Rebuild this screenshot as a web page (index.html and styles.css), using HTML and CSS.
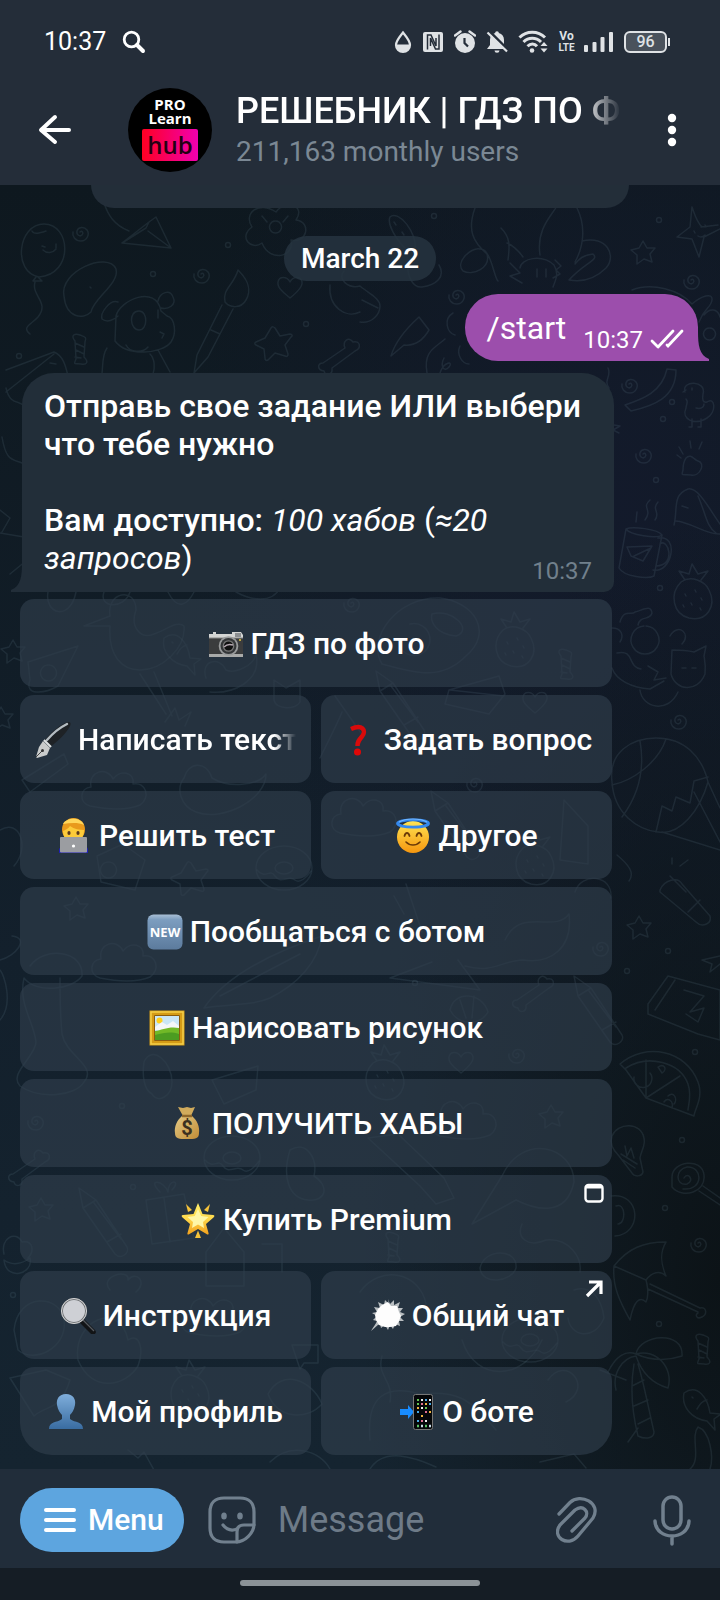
FILE: index.html
```html
<!DOCTYPE html>
<html lang="ru">
<head>
<meta charset="utf-8">
<meta name="viewport" content="width=device-width, initial-scale=1">
<title>РЕШЕБНИК | ГДЗ ПО ФОТО</title>
<link rel="stylesheet" href="styles.css">
</head>
<body>
<div class="app">
  <div class="status">
    <span class="status-time">10:37</span>
    <svg class="ic" width="24" height="24" viewBox="0 0 24 24" fill="none" stroke="#fff"><circle cx="9.500" cy="9.500" r="7.300" stroke-width="2.800"/><path d="M15 15l6 6" stroke-width="4" stroke-linecap="round"/></svg>
    <div class="status-right">
      <svg class="ic" width="18" height="24" viewBox="0 0 18 24"><path d="M9 2.500C6 6.500 2 10.500 2 15a7 7 0 0 0 14 0C16 10.500 12 6.500 9 2.500z" fill="none" stroke="#dfe2e5" stroke-width="2.200"/><path d="M2 14.500h14a7 7.500 0 0 1-14 0z" fill="#dfe2e5"/></svg>
      <svg class="ic" width="22" height="24" viewBox="0 0 22 24"><rect x="1" y="2" width="20" height="20" rx="2" fill="#dfe2e5"/><path d="M5.500 19.500V5H9l5 11V8M17 4.500V19h-3.500L8.500 8v8" fill="none" stroke="#242d39" stroke-width="1.500"/></svg>
      <svg class="ic" width="22" height="24" viewBox="0 0 22 24"><circle cx="11" cy="13" r="10" fill="#dfe2e5"/><path d="M1 5.500l5.500-4M21 5.500l-5.500-4" stroke="#dfe2e5" stroke-width="2.400" stroke-linecap="round"/><path d="M10.500 8v5l3.500 3.500" fill="none" stroke="#242d39" stroke-width="2.200"/></svg>
      <svg class="ic" width="22" height="24" viewBox="0 0 22 24"><path d="M11 1.200c1.200 0 1.800.8 1.800 1.800 3.400.9 5.200 3.600 5.200 7v5l3 4H1l3-4v-5c0-3.400 1.800-6.100 5.200-7 0-1 .6-1.800 1.800-1.800z" fill="#dfe2e5"/><path d="M8.500 20.500h5a2.500 2.300 0 0 1-5 0z" fill="#dfe2e5"/><path d="M3 1l19 19" stroke="#242d39" stroke-width="3"/><path d="M1.500 2.500l19.500 19" stroke="#dfe2e5" stroke-width="2.200"/></svg>
      <svg class="ic" width="31" height="24" viewBox="0 0 31 24"><g fill="none" stroke="#dfe2e5" stroke-width="3"><path d="M1.500 7.500c7-7 18.500-7 25.500 0"/><path d="M5.500 12c5-5 12.500-5 17.500 0"/><path d="M9.500 16.300c3-3 7-3 9.500 0"/></g><circle cx="14" cy="20.500" r="2.300" fill="#dfe2e5"/><path d="M22.500 16l3.500-4 3.500 4zM22.500 18.500l3.500 4 3.500-4z" fill="#dfe2e5"/></svg>
      <span class="volte"><span class="vo">Vo</span><span class="lte">LTE</span></span>
      <svg class="ic" width="30" height="24" viewBox="0 0 30 24" fill="#dfe2e5"><rect x="0" y="15" width="4" height="7" rx="1"/><rect x="8.500" y="12" width="4" height="10" rx="1"/><rect x="16.500" y="7" width="4" height="15" rx="1"/><rect x="25" y="2" width="4" height="20" rx="1"/></svg>
      <span class="battery">96</span>
    </div>
  </div>

  <header class="header">
    <button class="icon-btn back" aria-label="Back"><svg width="36" height="34" viewBox="0 0 36 34" fill="none" stroke="#fff" stroke-width="4" stroke-linecap="round" stroke-linejoin="round"><path d="M17 4L3 17l14 12M4 17h27"/></svg></button>
    <div class="avatar"><span class="av-pro">PRO</span><span class="av-learn">Learn</span><span class="av-hub">hub</span></div>
    <div class="titles">
      <h1 class="title">РЕШЕБНИК | ГДЗ ПО Ф</h1>
      <p class="subtitle">211,163 monthly users</p>
    </div>
    <button class="icon-btn more" aria-label="More"><svg width="10" height="34" viewBox="0 0 10 34" fill="#fff"><circle cx="5" cy="5" r="4.200"/><circle cx="5" cy="17" r="4.200"/><circle cx="5" cy="29" r="4.200"/></svg></button>
  </header>

  <main class="chat">
    <svg class="doodles" viewBox="0 185 720 1284" preserveAspectRatio="xMidYMin slice" fill="none" stroke="#8fb0c0" stroke-opacity=".115" stroke-width="1.500" stroke-linecap="round" stroke-linejoin="round" aria-hidden="true">
      <defs>
        <path id="spiral" d="M1 1c2-2 4 1 2 3s-6 0-5-4 7-5 10-1 0 11-6 11-9-5-8-9"/>
        <path id="star" d="M-5-14c1-2 3-1 4 0l5 8 10-2c2 0 3 2 1 3l-6 8 3 9c0 2-1 3-3 2l-10-3-7 7c-2 1-3 0-3-2l-1-9-8-4c-2-1-1-3 0-3l9-4z"/>
        <path id="star-s" d="M-1-10l4 7 8 0-5 6 2 8-8-3-7 5 0-9-6-5 8-2z"/>
        <circle id="dot" r="2.500"/>
        <path id="heart" d="M0 10C-6 5-13 0-12-6c1-6 9-6 12 0 3-6 11-6 12 0 1 5-7 12-12 16z"/>
        <path id="candy" d="M-5-9c-5-6 0-8 5-6s7 2 5 7l-1 15c5 5 3 8-3 7s-8 2-5-5zM-5-7l9 4M-4 0l8 4M-5 7l6 1"/>
        <path id="bone" d="M-17 8l22-15c-3-7 4-12 8-6 7-2 9 6 2 9L-8 13c1 8-7 8-8 3-7-1-7-8-1-8z"/>
        <path id="bulb" d="M-8 10c-5-5-10-12-7-20C-9-24 14-24 17-8c2 8-3 12-4 20l3 14c-1 5-9 5-11 1zM-6 8l16 10M-4 14l12 8M-2 0l2 10 4-8 3 10"/>
        <path id="fish" d="M-16-12C-2-22 8-6 10 8l11 1-7 5 1 11-8-9C-8 14-19 2-16-12zM-8-8l1 1M-3 4C0-1 2-4 7-5"/>
        <path id="cloud" d="M-30 18c-12-4-10-18 1-19-3-16 16-21 22-8 7-10 22-7 20 5 13-3 18 14 7 21-12 5-30 5-50 1z"/>
        <g id="donut"><ellipse rx="28" ry="22"/><ellipse rx="9" ry="6"/><path d="M-27 2c8 10 13-2 18 6 6 9 14-2 20 4 5 4 12-3 16-9"/></g>
        <path id="fruit" d="M-12-12C-24 0-20 20-4 24c18 4 28-12 20-28-4-9-18-15-28-8zM-8-14l-6-9 10 3 3-10 6 10 10-3-7 9M-8 0l1 2M2-4l1 2M8 4l1 2M-2 9l1 2M-10 11l1 2M7 14l1 2"/>
        <path id="pencil" d="M-24-34l4 20 32 46c6 6 15-1 12-7L-7-22zM-20-14l13-8M4 20l14-8M-9-19l27 36"/>
      </defs>
      <use href="#spiral" x="79" y="231"/><use href="#spiral" x="200" y="273"/><use href="#spiral" x="455" y="294"/><use href="#spiral" x="690" y="279"/><use href="#spiral" x="628" y="383"/><use href="#spiral" x="642" y="453"/><use href="#spiral" x="677" y="719"/><use href="#spiral" x="350" y="602"/><use href="#spiral" x="473" y="782"/><use href="#spiral" x="599" y="946"/><use href="#spiral" x="515" y="1053"/><use href="#spiral" x="697" y="1242"/><use href="#spiral" x="34" y="1120"/>
      <use href="#star" x="276" y="342"/><use href="#star-s" x="644" y="251"/><use href="#star-s" x="640" y="926"/><use href="#star-s" x="14" y="650"/><use href="#star-s" x="2" y="717"/><use href="#star" x="192" y="877"/><use href="#star-s" x="552" y="1115"/><use href="#star-s" x="42" y="1208"/><use href="#star-s" x="77" y="907"/>
      <use href="#dot" x="153" y="274"/><use href="#dot" x="228" y="245"/><use href="#dot" x="306" y="324"/><use href="#dot" x="19" y="356"/><use href="#dot" x="434" y="216"/><use href="#dot" x="659" y="220"/><use href="#dot" x="672" y="402"/><use href="#dot" x="663" y="419"/><use href="#dot" x="656" y="480"/><use href="#dot" x="660" y="588"/><use href="#dot" x="668" y="951"/><use href="#dot" x="627" y="971"/><use href="#dot" x="695" y="1052"/><use href="#dot" x="682" y="1140"/><use href="#dot" x="665" y="1208"/><use href="#dot" x="659" y="1324"/><use href="#dot" x="415" y="983"/><use href="#dot" x="122" y="1106"/><use href="#dot" x="13" y="1295"/><use href="#dot" x="133" y="1187"/>
      <use href="#heart" x="290" y="288"/><use href="#heart" x="535" y="703"/><use href="#heart" x="461" y="1063"/>
      <use href="#candy" x="80" y="350"/><use href="#candy" x="566" y="665"/><use href="#candy" x="703" y="1350"/><use href="#candy" x="393" y="1248"/>
      <use href="#bone" x="340" y="355"/><use href="#bone" x="534" y="992"/><use href="#bone" x="30" y="1166"/>
      <use href="#bulb" x="627" y="1146"/><use href="#fish" x="700" y="1405"/><use href="#fish" x="180" y="650"/>
      <use href="#cloud" x="120" y="788"/><use href="#cloud" x="370" y="815"/><use href="#cloud" x="470" y="1118"/><use href="#cloud" x="220" y="1315"/><use href="#cloud" x="130" y="960"/>
      <use href="#donut" x="232" y="1158"/><use href="#donut" x="284" y="868"/><use href="#donut" x="530" y="1340"/>
      <use href="#fruit" x="693" y="594"/><use href="#fruit" x="515" y="642"/><use href="#fruit" x="385" y="1075"/><use href="#fruit" x="190" y="1390"/><use href="#fruit" x="535" y="860"/>
      <use href="#pencil" x="103" y="1222"/><use href="#pencil" x="400" y="705"/><use href="#pencil" x="598" y="1010"/><use href="#pencil" x="455" y="825"/>
      <path d="M44 224c27 0 30 50-5 53C12 272 18 224 44 224zM32 231c2 4 8 2 14 0M42 246l3 1M56 244v4M43 250c4 4 10 3 13-1M36 277l-3 4h9l-4-4M35 282c-4 14 15 20 3 35-6 7-17 10-8 17"/>
      <path d="M122 243l27-21 7-5 15 31zM122 243l24-15 3-6M148 231l23 17M104 203c4 12 10 22 25 28"/>
      <path d="M64 296c-5-25 44-45 52-27 4 14-23 30-25 43-8 8-25 6-27-16zM90 287l1 1"/>
      <path d="M116 316c4-16 40-32 45-5l6 5c8 2 10 17 4 26-9 12-44 15-56-1zM118 302c-8-3-18 11-16 17 5 4 12 1 16-3M158 301c2-9 12-12 15-4 4 8-5 13-12 11M139 311c9 0 9 19 0 19s-11-19 0-19zM158 310v8M160 332l4 2-2 4M126 345c4 8 17 8 22 2M107 348c-5 7-4 16-5 26M150 354c5 5 5 14 3 20M158 350l12 22"/>
      <path d="M238 270c8 8 15 18 8 30-5 9-16 8-21 2-3-13 9-17 13-32zM222 305l-25 50-3 18 14-16 25-48M211 330l9 4"/>
      <path d="M276 212c-18-12-33 2-24 15-14 10-1 24 10 16 8 20 33 14 29-3 16 4 21-18 5-20 10-14-10-22-20-8zM275 221a6 6 0 1 0 1 0M262 216l5 6M288 216l-5 6"/>
      <path d="M390 217c8-8 28 16 25 33M390 217c-4 8 12 34 25 37M394 222l2 3M402 232l2 3M408 260c-2 18 6 28 14 27 14-2 24-10 17-22"/>
      <path d="M330 285c-2 22 16 34 30 27M344 271c-7 8 4 18 16 15 8 7 20 12 20 20s-8 18-20 16M362 300l16 8"/>
      <path d="M475 208c-8 22-2 34 12 46 4 14-14 22-24 17-8-8 7-24 17-22 11-1 14 29 18 32M501 228c9 9 9 17 7 32M507 243c4 1 12 8 16 14M540 255c-4-26 12-40 17-49M577 208c8 16 8 36-2 54M582 241c25-6 35 15 24 27-12 12-26 14-37 12 16-18 31-20 24-26-10 1-14 5-18 10M520 268c1-10 22-14 34-3 5 9 2 14-1 22M510 263l10 10-10 3 12 7M555 260l6 6-5 4 4 4-7 4M537 269v8M546 269v8"/>
      <path d="M692 207c2 5 4 14 10 20M692 207l-2 20-13 10 15 2 7 18 5-20 16-8M701 227l17-2M694 231l1 2M705 225l1 2M698 236c3 2 5 1 7-1"/>
      <path d="M391 356c4-14 17-29 28-39l10 13c-7 12-16 16-25 15zM427 373c-4-22 8-25 18-34M440 373c4-12 14-12 9-6s-9-1-5-9M453 313c-10 6-6 20 2 22M460 346c-4 8 2 18 9 18"/>
      <path d="M632 290c20-8 48 0 60 14 9-8 21-12 20-4s-8 8-13 22M704 315c6-8 14-6 16 2M709 328a6 6 0 1 0 1 0"/>
      <path d="M625 405c18-6 37-13 42-36l9 1c0 28-23 36-45 41zM608 368c4 8-5 12 1 20M614 425l6 1-7 4 6 3"/>
      <path d="M685 392c-4-12 22-12 18 2-1 6 0 9 4 8 8-6 10 10 0 16-13 8-26 1-21-10 0-4 3-6 0-9M692 419v8h-3M701 419v8h-3M686 390l-3 2M692 388v2M696 408c4 1 8 0 8-4"/>
      <path d="M686 458c5-5 8 2 12 3 8 2 2 16-7 14-9-1-10 2-8-5 0-4 1-9 3-12zM679 447l4 7M690 441l1 7M702 442l-3 7M677 455l4 3"/>
      <path d="M674 525c4-16-2-30 14-36 10-2 20 18 32 35M676 521c15 1 30 14 44 13M682 506l6 2M698 496c8 18 8 30 18 37"/>
      <path d="M626 529c6-3 32 0 36 6-5 4-32 0-36-6zl-7 39c5 9 29 11 35 8l8-41M660 544c8-7 17 22-4 22M658 538c22-4 14 36-5 32M627 547l25-1-9 15-12-5zM634 556l17-8M636 522l1-10M645 520c8-11-4-12 5-20M655 520c6-8-4-10 3-18"/>
      <path d="M620 622c4-14 12-6 15-10 8-2 16-8 17 1-2 8-12 2-14 12M612 628c10 0 12 8 8 14M644 626a14 14 0 1 0 2 0M670 636c8-14 22-2 12 8M672 650l-1 24c4 16 26 20 34 0 1-8 0-12-1-18l2-10-12 6c-8-2-14-2-22-2zM682 668h4M692 668h4M612 668c4 12 20 20 38 21l14-8M640 690c2 18 28 24 38 2M648 666l10 6-4 8 12-2M617 653c18-4 10 14 24 16"/>
      <path d="M612 782c-4-30 20-44 44-44 28 0 46 18 52 44-8 28-28 54-50 50-20-2-44-18-46-50zM612 785c20-4 46-22 54-46M640 741c6 34-6 60-18 76M656 832l6-26 10 5 4-14 14 6 4-22 14-4M662 832l58 18M694 792l26 50M708 782l12 26"/>
      <path d="M660 890c4-10 18-14 22-6l28 32c2 8-8 12-14 6l-36-30zM670 876l16 16M688 912l12-12M672 864v-6M680 866l8-6M617 855c12 10 18 18 12 26M720 956l-18 4 10 4-2 8 10-8"/>
      <path d="M648 1004l20-28 52 14v50l-22-6-50-20zM655 1010l20-30M684 990l20 6-14 16 14-4-6 14-12-8"/>
      <path d="M620 1064c26-22 66-14 78 18 6 16-4 28-4 34l-48-18-20-28zM626 1068c22-14 54-6 62 16 4 12 0 22 0 26M646 1060v38l34-22M634 1077a9 9 0 1 0 16-4M658 1067c6-4 10 2 4 6zM668 1096c6-6 10 4 6 8M664 1102c4-6 10 0 8 6"/>
      <path d="M672 1177c0-16 30-20 32-2 2 18-22 24-32 12zM684 1178c4-7 11 3 3 6-12 2-12-15 0-17 16-1 17 24-4 22M703 1186l17 12M699 1191l21 14M611 1196c30-4 32 38 4 40M616 1206c10-4 10 18 2 18"/>
      <path d="M614 1266c14-18 30-24 52-24-6 10-6 20 0 34-6-6-14-4-20 4 0 0 4 14 0 22-6-6-12-2-16 18-10-18-18-34-16-54zM614 1266l32 14M650 1284l50 24c6-2 8 6 2 9s-7-3-4-4M648 1289l50 23"/>
      <path d="M608 1372c8-16 18-22 28-18 4-20 48-24 46 2-12 4-28 6-46-2 20-6 38 14 32 34-14-4-26-14-32-32-14 2-24 18-20 34M634 1364c-4 24-2 48 4 72 8 4 16 2 16-4-6-26-10-48-16-68M632 1386l12-6M634 1406l14-6M638 1424l12-6M628 1442l10-14M690 1469c12-10 0-32 8-42 12 4 16 30 12 42M600 1370l26 10"/>
      <path d="M6 370l48-18c10 4 12 16 14 24M6 392l48-38M6 388c4 18 14 12 18 18M50 363l6 1M2 437c4 24 10 22 20 26M0 510l10 8-8 14M0 533l24 4M10 574l22-18M0 830c20-12 30 18 14 36M0 960c16-4 30-22 12-24M0 1020c14-16 4-46 0-50"/>
      <path d="M48 592c-4 22 22 30 28 0M104 592c-6 16 20 18 26 0M168 592c10 20 20 12 26 0M236 592c14 8 36 12 44-4M84 626l26-10c-4-24 26-30 26-6-6 16 4 30 18 24 12-4 24-14 30-8 2 22-22 44-44 44-18 0-32-14-30-44zM28 662l50-16-20 40c-14 8-34 10-28-6zM48 665a8 8 0 1 0 1 0M140 674l26 40M154 672l18 44M165 722l10-14 4 12 12-8-6 14"/>
      <path d="M206 678c-6-18 14-22 20-8 8 4 28-4 30-16 6 28-24 40-46 38M274 700v-20l12 8 14-8v22c-4 8-24 8-26-2zM382 664c-16-26 16-68 58-66 34 4 54 34 26 58-24 24-46 18-84 8zM398 640a16 16 0 1 0 12-16M432 614c20-6 42 16 24 22-20-2-26-14-24-22M449 690l50-14 6 18-16 20-44-10zM450 690l54 6"/>
      <path d="M184 778c4-16 22-18 28 0 16 10 46 8 54-4 0 26-44 48-70 38-16-6-20-24-12-34zM22 780l42-26 4 10-38 28zM97 856l26-12 22 16-10 30-34-8zM108 862a8 8 0 1 0 1 0M335 696l28 40M320 758c10-20 20-40 22-46M575 892c6-20 38-18 36 6M564 800l24 26v38l-28-4z"/>
      <path d="M204 1008c22-32 70-56 118-72-4 26-24 48-52 62-18 8-44 6-66 10zM220 996l80-42M406 884l16 48M394 896l10 18M432 962l-42 16 90 12-22-30M505 940c16-34 50-6 64-26 4 34-18 50-46 46-20 0-30 14-58 6M450 1010c4-20 32-18 38 2-6 12-28 16-38-2zM460 1000l6 18M474 996l-2 22"/>
      <path d="M30 966c14-20 54-16 52 10-10 14-46 18-58 2-6 26 10 44 12 64 0 14-28 32-16 44 20 14 56 10 64-4 14-16-18-26-22-48-2-20-2-42-2-56M144 1062c8-18 28 0 28 20 0 14-14 22-20 12-8-4-10-18-8-32zM212 1080l46-14-2 24-32 14zM290 1150c16-10 28 8 24 26 16 10 12 26-6 24-20-2-26-24-18-50M110 1290c-12-14 20-22 18-10 8-10 20 2 8 12"/>
      <path d="M146 1200l38-6 10 44-42 6zM164 1198l6 44M160 1192c-14-14 4-12 8 0 0-14 14-12 4-2M368 1138l52 48 16 18 18-6-10-20-46-44zM472 1224l30-48c20-44 72-30 72 6-8 38-42 26-58 18zM522 1224c-6 14 6 24 24 16 24-2 36 18 34 32M480 1268c4-20 38-20 36 0-4 14-34 18-36 0M206 1252l18-24 20 24v34h-38zM262 1244h20v28"/>
      <path d="M14 1330c4-38 46-36 50-10 4 28-30 44-46 30zM78 1360c-6-40 42-60 50-20 12-8 16 10 10 26-12 20-46 28-60-6zM10 1378l36-8 24 10c-10 32-22 24-36 36zM268 1394c14-26 44-14 54 10-14 16-44 16-54-10zM292 1345h26v18h-14l-4 6zM128 1450l10 8 6-6 10 18M270 1462c20-20 50-12 60 7M370 1440c-4-44 16-56 50-46 36-4 50 4 76 36M382 1356c-6 20 12 24 8 46M370 1469c14-22 44-12 66-2M540 1462l34-8 12 14"/>
      <path d="M360 1292c20-28 60-20 66 12M462 1340c14 44 62 40 80 0M548 1380c18-26 46 8 18 22M574 1290c18-6 28 10 30 28-10 24-34 18-36 0M4 1254c-4-16 12-24 18-12 12-2 12 10 6 16M4 1260c8 6 18 4 26-2 4 16-24 24-26 2z"/>
    </svg>

    <div class="prev-bubble"></div>
    <div class="date">March 22</div>

    <div class="out">
      <span class="out-text">/start</span>
      <span class="out-time">10:37</span>
      <svg class="checks" width="34" height="20" viewBox="0 0 34 20" fill="none" stroke="#fff" stroke-width="2.800" stroke-linecap="round"><path d="M2 12l6 6M8 18L23 2M17 16l1 1L32 2"/></svg>
      <svg class="tail tail-out" width="12" height="30" viewBox="0 0 12 30"><path d="M0 0c0 14 1 24 11 28v2H0z" fill="#9c4eac"/></svg>
    </div>

    <section class="incoming">
      <div class="in">
        <div class="in-text"><b>Отправь свое задание ИЛИ выбери что тебе нужно</b><br><br><b>Вам доступно:</b> <i>100 хабов</i> (<i>≈20 запросов</i>)<span class="in-time">10:37</span></div>
        <svg class="tail tail-in" width="12" height="30" viewBox="0 0 12 30"><path d="M12 0c0 14-1 24-11 28v2h11z" fill="#222e39"/></svg>
      </div>

      <div class="keys">
        <button class="key wide"><span class="label">
          <svg class="emoji" viewBox="0 0 36 36"><path d="M1 8h4V6h3v2h16V6h9l2 3v5H1z" fill="#d4d5d4"/><rect x="1" y="12" width="34" height="17" fill="#3b3c3d"/><rect x="1" y="28" width="34" height="3" fill="#a9aaa9"/><path d="M1 12h34" stroke="#888"/><rect x="27" y="7" width="6" height="4" fill="#8c8f92"/><circle cx="20.500" cy="20" r="9.800" fill="#999b9c"/><circle cx="20.500" cy="20" r="8" fill="#343638"/><circle cx="20.500" cy="20" r="5.200" fill="#111" stroke="#777" stroke-width="1.300"/><path d="M16 21c3-3 6-3 9-2" stroke="#b6a9b2" stroke-width="1.500" fill="none"/><circle cx="32" cy="14" r="1" fill="#e4ca44"/></svg>
          <span>ГДЗ по фото</span></span></button>

        <button class="key"><span class="label clipped">
          <svg class="emoji" viewBox="0 0 36 36"><path d="M9 19C16 10 26 2 33 0c3 0 3 2 2 4-4 8-12 15-20 21z" fill="#1e2226"/><path d="M12 18C18 11 26 5 32 2" fill="none" stroke="#b4bcc1" stroke-width="2.400" stroke-linecap="round"/><path d="M9 18l7 7" stroke="#dfe2e3" stroke-width="2.200"/><path d="M8 19l7 7-3 7-10 3-1-1 3-10z" fill="#c9cbcb"/><path d="M1 35l6-6" stroke="#444" stroke-width="1"/><circle cx="7.500" cy="28.500" r="1.500" fill="#333"/></svg>
          <span>Написать текст</span></span></button>
        <button class="key"><span class="label">
          <svg class="emoji" viewBox="0 0 36 36"><path d="M10 7C21 2 26 8 21 14.500c-3 3.500-4.500 5-4.500 9.500" fill="none" stroke="#d90b0b" stroke-width="4.500"/><circle cx="16.500" cy="30" r="3.500" fill="#e00707"/></svg>
          <span>Задать вопрос</span></span></button>

        <button class="key"><span class="label">
          <svg class="emoji" viewBox="0 0 36 36"><path d="M3 35V31c2-3 5-5 9-6h12c4 1 7 3 8 6v4z" fill="#2020b8"/><circle cx="17.500" cy="11.500" r="11.500" fill="#e99a1c"/><path d="M7 13c2-1 5-2 7-5 4 3 10 4 14 4 0 8-4 12-10.500 12S7 20 7 13z" fill="#fccb3a"/><path d="M7 6c3-6 17-8 21 1-6-3-14-2-21-1z" fill="#ffd65a"/><ellipse cx="13" cy="15" rx="1.600" ry="2" fill="#59391d"/><ellipse cx="22" cy="15" rx="1.600" ry="2" fill="#59391d"/><rect x="4" y="19" width="27" height="15.500" rx="1" fill="#9b9da1"/><circle cx="17.500" cy="28" r="1.600" fill="#fff"/></svg>
          <span>Решить тест</span></span></button>
        <button class="key"><span class="label">
          <svg class="emoji" viewBox="0 0 36 36"><defs><linearGradient id="face" x2="0" y2="1"><stop stop-color="#ffe452"/><stop offset="1" stop-color="#f5960f"/></linearGradient></defs><circle cx="18" cy="19" r="16" fill="url(#face)"/><ellipse cx="18" cy="5.500" rx="15.500" ry="3.600" fill="none" stroke="#3489ee" stroke-width="2.800"/><path d="M4 4c7-4 21-4 28 0" fill="none" stroke="#74b8ff" stroke-width="1.200"/><path d="M9.500 18c1-4 4-4 5 0M21.500 18c1-4 4-4 5 0" fill="none" stroke="#6b3a08" stroke-width="1.800" stroke-linecap="round"/><path d="M11 24c4 4 10 4 14 0" fill="none" stroke="#6b3a08" stroke-width="1.600" stroke-linecap="round"/></svg>
          <span>Другое</span></span></button>

        <button class="key wide"><span class="label">
          <svg class="emoji" viewBox="0 0 36 36"><defs><linearGradient id="new" x2="0" y2="1"><stop stop-color="#a9bfd5"/><stop offset=".15" stop-color="#7c9dbf"/><stop offset="1" stop-color="#5c7b9d"/></linearGradient></defs><rect x=".5" y=".5" width="35" height="35" rx="6" fill="url(#new)"/><text class="new-text" x="18" y="23" text-anchor="middle">NEW</text></svg>
          <span>Пообщаться с ботом</span></span></button>

        <button class="key wide"><span class="label">
          <svg class="emoji" viewBox="0 0 36 36"><rect x=".5" y=".5" width="35" height="35" fill="#d49b16"/><path d="M2 2h32v32H2z" fill="none" stroke="#f4cf48" stroke-width="1.500"/><path d="M5.500 5.500h25v25h-25z" fill="#c9e6f6" stroke="#8b5d0d" stroke-width="1"/><circle cx="10.500" cy="10.500" r="3" fill="#ffd01b"/><path d="M6 17l7-5 5 3 6-4 6 5v4H6z" fill="#f4f6f7"/><path d="M6 21c7-1 14-5 24-3v12H6z" fill="#71b927"/><path d="M6 25c9-2 15-4 24-1v6H6z" fill="#4c9c21"/></svg>
          <span>Нарисовать рисунок</span></span></button>

        <button class="key wide"><span class="label">
          <svg class="emoji" viewBox="0 0 36 36"><defs><linearGradient id="bag" x2="1" y2="1"><stop stop-color="#e4ca86"/><stop offset="1" stop-color="#c18c35"/></linearGradient></defs><path d="M9 1l5 1 4-1 4 1 4-1-4 9h-8z" fill="#d1ab5c"/><path d="M13 10h10c5 4 8 11 7 17 0 6-4 6-12 6S6 33 6 27c-1-6 2-13 7-17z" fill="url(#bag)"/><path d="M13 10h10" stroke="#8e672a" stroke-width="2.500"/><text class="dollar" x="18" y="29" text-anchor="middle">$</text></svg>
          <span>ПОЛУЧИТЬ ХАБЫ</span></span></button>

        <button class="key wide"><span class="label">
          <svg class="emoji" viewBox="0 0 36 36"><defs><linearGradient id="gold" x2="0" y2="1"><stop stop-color="#fff06b"/><stop offset=".5" stop-color="#ffd84a"/><stop offset="1" stop-color="#f3a11d"/></linearGradient></defs><path d="M18 1l4.500 11L33 13c1.500 0 2 1 .5 2.500L26 22l2.500 9c.5 1.500-.5 2-2 1L18 27l-8.500 5c-1.500 1-2.500.5-2-1L10 22l-7.500-6.500C1 14 1.500 13 3 13l10.500-1z" fill="url(#gold)"/><path d="M6 2l6 6-4 2zM30 2l-6 6 4 2zM18 28.500l3 7.500h-6z" fill="#f6c33a"/><path d="M18 7l3.200 7 7.300 1-5.500 5 1 6-6-3.500-6 3.500 1-6-5.500-5 7.300-1z" fill="#fff7a7"/></svg>
          <span>Купить Premium</span></span>
          <svg class="corner" width="20" height="20" viewBox="0 0 20 20"><rect x="1.500" y="2" width="17" height="16.500" rx="3" fill="none" stroke="#fff" stroke-width="2.400"/><path d="M2 3h16v2.500H2z" fill="#fff"/></svg></button>

        <button class="key"><span class="label">
          <svg class="emoji" viewBox="0 0 36 36"><path d="M22 23l11 11" stroke="#121416" stroke-width="5.500" stroke-linecap="round"/><path d="M23 22l11 11" stroke="#555a60" stroke-width="1.200"/><circle cx="14" cy="13" r="12" fill="#ced0d5" stroke="#6f7275" stroke-width="2"/><circle cx="14" cy="13" r="12.500" fill="none" stroke="#d7d8d9" stroke-width="1"/></svg>
          <span>Инструкция</span></span></button>
        <a class="key" href="#chat"><span class="label">
          <svg class="emoji" viewBox="0 0 36 36"><path d="M19 1l2 5 4-4v5l6-3-2 6h5l-3 4 5 2-5 3 4 4h-5l1 5-5-2-2 5-3-4-2 5-3-5-4 3-1-4c-3 1-5 4-9 7 2-4 5-7 6-10l-4-1 4-4-5-3 5-1-3-5 6 1-2-6 6 3 1-5 4 4z" fill="#b9bec1"/><path d="M19 4l3 4 6 0 2 6 2 4-2 5-3 5-6 1-5 0-6-2-3-5-1-5 3-6 4-4z" fill="#fdfdfd"/></svg>
          <span>Общий чат</span></span>
          <svg class="corner" width="20" height="20" viewBox="0 0 20 20" fill="none" stroke="#fff" stroke-width="3.200"><path d="M5 3h12v12M16.500 3.500L3 17"/></svg></a>

        <button class="key"><span class="label">
          <svg class="emoji" viewBox="0 0 36 36"><defs><linearGradient id="user" x2="0" y2="1"><stop stop-color="#7faedb"/><stop offset="1" stop-color="#396ca1"/></linearGradient></defs><path d="M18 0c7 0 10 5 9 11-1 5-3 8-5 10v4c5 4 13 2 13 10H1c0-8 8-6 13-10v-4c-2-2-4-5-5-10C8 5 11 0 18 0z" fill="url(#user)"/></svg>
          <span>Мой профиль</span></span></button>
        <button class="key"><span class="label">
          <svg class="emoji" viewBox="0 0 36 36"><path d="M1 15h8v-4l6 7-6 7v-4H1z" fill="#188cff"/><rect x="14.500" y=".500" width="19" height="35" rx="2" fill="#050709" stroke="#777" stroke-width="1"/><path d="M18 6h2M18 10h2M26 14h2" stroke="#62c654" stroke-width="2"/><path d="M22 6h2M30 6h2M22 14h2M26 27h2" stroke="#eee" stroke-width="2"/><path d="M26 6h2M30 10h2M18 18h2M18 27h2" stroke="#46a9e7" stroke-width="2"/><path d="M22 10h2M26 18h2M22 27h2" stroke="#e16f91" stroke-width="2"/><path d="M26 10h2M18 14h2M30 18h2M22 22h2" stroke="#efb43e" stroke-width="2"/><path d="M18 32h2M26 32h2" stroke="#5bc466" stroke-width="2.500"/><path d="M22 32h2M30 32h2" stroke="#c9dce9" stroke-width="2.500"/></svg>
          <span>О боте</span></span></button>
      </div>
    </section>
  </main>

  <footer class="composer">
    <button class="menu"><svg width="32" height="26" viewBox="0 0 32 26" stroke="#fff" stroke-width="4" stroke-linecap="round"><path d="M2 3h28M2 13h28M2 23h28"/></svg><span>Menu</span></button>
    <button class="icon-btn" aria-label="Stickers"><svg width="48" height="48" viewBox="0 0 48 48" fill="none" stroke="#71808e" stroke-width="3.200" stroke-linecap="round" stroke-linejoin="round"><path d="M28 46H16C7 46 2 41 2 32V16C2 7 7 2 16 2h16c9 0 14 5 14 14v12c0 9-9 18-18 18z"/><path d="M29 46V36c0-5 3-7 7-7h10"/><path d="M15 29c4 5 9 6 14 4"/><ellipse cx="16" cy="20" rx="1.200" ry="2" fill="#71808e"/><ellipse cx="32" cy="20" rx="1.200" ry="2" fill="#71808e"/></svg></button>
    <input class="field" type="text" placeholder="Message" aria-label="Message">
    <button class="icon-btn" aria-label="Attach"><svg width="42" height="48" viewBox="0 0 42 48" fill="none" stroke="#71808e" stroke-width="3.300" stroke-linecap="round" stroke-linejoin="round"><path d="M3 18L14 6.500C24-3.500 46 7 37 22L22 40C12 52-5 41 4 29L19 14C27 8 34 16 29 22L16 35"/></svg></button>
    <button class="icon-btn mic" aria-label="Voice message"><svg width="38" height="52" viewBox="0 0 38 52" fill="none" stroke="#71808e" stroke-width="3.500" stroke-linecap="round"><rect x="10" y="3" width="18" height="32" rx="9"/><path d="M2 27c1 20 33 20 34 0M19 43v7"/></svg></button>
  </footer>
  <div class="nav"><span class="handle"></span></div>
</div>
</body>
</html>
```

FILE: styles.css
```css
* { box-sizing: border-box; }

body {
  margin: 0;
  background: #151d25;
  color: #fff;
  font-family: Roboto, "Noto Sans", sans-serif;
}

h1, p { margin: 0; }

button, input {
  border: 0;
  margin: 0;
  padding: 0;
  background: none;
  color: inherit;
  font-family: inherit;
}

svg { display: block; flex: none; }

.app {
  min-height: 100vh;
  display: flex;
  flex-direction: column;
}

/* Status bar */
.status {
  height: 84px;
  padding: 0 53px 0 44px;
  display: flex;
  align-items: center;
  gap: 16px;
  background: #242d39;
}

.status-time { font-size: 25px; line-height: 28px; }

.status-right {
  margin-left: auto;
  display: flex;
  align-items: center;
  gap: 10px;
  color: #dfe2e5;
}

.volte {
  display: flex;
  flex-direction: column;
  align-items: center;
  width: 15px;
  font-weight: 700;
  line-height: 11px;
}

.vo { font-size: 12px; }
.lte { font-size: 10px; }

.battery {
  position: relative;
  width: 43px;
  height: 22px;
  border: 2px solid #dfe2e5;
  border-radius: 6px;
  background: #4a525c;
  font-size: 16px;
  line-height: 18px;
  font-weight: 500;
  text-align: center;
}

.battery::after {
  content: "";
  position: absolute;
  right: -5px;
  top: 5px;
  width: 2px;
  height: 8px;
  background: #dfe2e5;
}

/* Chat header */
.header {
  height: 101px;
  padding: 0 43px 10px 38px;
  display: flex;
  align-items: center;
  background: #242d39;
}

.icon-btn { flex: none; display: flex; align-items: center; justify-content: center; }

.avatar {
  flex: none;
  width: 84px;
  height: 84px;
  margin-left: 54px;
  padding-top: 9px;
  border-radius: 50%;
  background: #000;
  display: flex;
  flex-direction: column;
  align-items: center;
  font-family: "Open Sans", sans-serif;
  font-weight: 700;
  font-size: 15px;
  line-height: 14px;
}

.av-hub {
  width: 56px;
  height: 32px;
  margin-top: 4px;
  border-radius: 2px;
  background: linear-gradient(90deg, #ff0022, #f000b0);
  color: #240012;
  font-size: 24px;
  line-height: 31px;
  font-weight: 600;
  text-align: center;
}

.titles { flex: 1; min-width: 0; margin-left: 24px; }

.title {
  max-width: 385px;
  overflow: hidden;
  white-space: nowrap;
  font-size: 36px;
  line-height: 42px;
  font-weight: 500;
  -webkit-mask-image: linear-gradient(90deg, #000 calc(100% - 40px), transparent);
  mask-image: linear-gradient(90deg, #000 calc(100% - 40px), transparent);
}

.subtitle { padding-top: 2px; font-size: 28px; line-height: 36px; color: #7b8894; }

/* Conversation */
.chat {
  position: relative;
  flex: 1;
  overflow: hidden;
  padding-bottom: 14px;
  display: flex;
  flex-direction: column;
  background:
    radial-gradient(ellipse 50% 60% at 100% 85%, #0c1317, rgba(12, 19, 23, 0)),
    radial-gradient(ellipse 60% 45% at 85% 25%, #131a2b, rgba(19, 26, 43, 0)),
    linear-gradient(180deg, #0e181f, #13202c 60%, #152430);
}

.doodles {
  position: absolute;
  top: 0;
  left: 0;
  width: 100%;
  height: 100%;
}

.prev-bubble,
.date,
.out,
.incoming { position: relative; }

.prev-bubble {
  height: 23px;
  margin: 0 91px;
  border-radius: 0 0 32px 32px;
  background: #232e39;
}

.date {
  align-self: center;
  margin-top: 28px;
  padding: 0 17px;
  border-radius: 23px;
  background: rgba(38, 52, 63, .85);
  font-size: 28px;
  line-height: 45px;
  font-weight: 500;
}

.out {
  align-self: flex-end;
  height: 67px;
  margin: 13px 22px 0 0;
  padding: 0 14px 0 22px;
  border-radius: 33px 33px 0 33px;
  background: #9c4eac;
  display: flex;
  align-items: flex-end;
}

.out-text { font-size: 32px; line-height: 38px; padding-bottom: 14px; }
.out-time { margin-left: 17px; font-size: 24px; line-height: 28px; padding-bottom: 7px; }
.checks { margin-left: 7px; margin-bottom: 12px; }

.tail { position: absolute; bottom: 0; }
.tail-out { right: -12px; }
.tail-in { left: -12px; }

.incoming {
  margin: 12px 108px 0 20px;
  display: flex;
  flex-direction: column;
  gap: 7px;
}

.in {
  position: relative;
  margin: 0 -2px 0 2px;
  padding: 14px 22px 15px;
  border-radius: 32px 32px 10px 0;
  background: #222e39;
}

.in-text { font-size: 32px; line-height: 38px; }
.in-text b { font-weight: 500; }

.in-time {
  float: right;
  margin-top: 18px;
  margin-bottom: -8px;
  font-size: 24px;
  line-height: 28px;
  color: #71808c;
}

/* Inline keyboard */
.keys {
  display: grid;
  grid-template-columns: 1fr 1fr;
  gap: 8px 10px;
}

.key {
  position: relative;
  min-width: 0;
  height: 88px;
  padding: 2px 15px 0;
  border-radius: 14px;
  background: rgba(48, 63, 76, .64);
  color: #fff;
  text-decoration: none;
  font-size: 30px;
  line-height: 36px;
  font-weight: 500;
  display: flex;
  align-items: center;
  justify-content: center;
}

.key.wide { grid-column: 1 / -1; }
.key:nth-last-child(2) { border-bottom-left-radius: 32px; }
.key:last-child { border-bottom-right-radius: 32px; }

.label {
  min-width: 0;
  display: flex;
  align-items: center;
  gap: 7px;
  white-space: nowrap;
}

.clipped {
  overflow: hidden;
  -webkit-mask-image: linear-gradient(90deg, #000 calc(100% - 22px), transparent);
  mask-image: linear-gradient(90deg, #000 calc(100% - 22px), transparent);
}

.emoji { width: 36px; height: 36px; }
.new-text { fill: #fff; font-family: "Open Sans", sans-serif; font-size: 13px; font-weight: 700; }
.dollar { fill: #3b3020; font-size: 20px; font-weight: 700; }

.corner { position: absolute; top: 8px; right: 8px; }

/* Composer */
.composer {
  height: 99px;
  padding: 2px 29px 0 20px;
  display: flex;
  align-items: center;
  background: #212d3a;
}

.menu {
  flex: none;
  height: 64px;
  margin-right: 24px;
  padding: 0 20px 0 24px;
  border-radius: 32px;
  background: #5da5df;
  display: flex;
  align-items: center;
  gap: 12px;
  font-size: 30px;
  line-height: 36px;
  font-weight: 500;
}

.field {
  flex: 1;
  min-width: 0;
  height: 64px;
  margin-left: 22px;
  outline: none;
  font-size: 36px;
}

.field::placeholder { color: #6e7b88; opacity: 1; }

.mic { margin-left: 55px; }

.nav {
  height: 32px;
  padding-bottom: 2px;
  display: flex;
  justify-content: center;
  align-items: center;
  background: #151d25;
}

.handle {
  width: calc(100% / 3);
  height: 6px;
  border-radius: 3px;
  background: #8b9297;
}
```
